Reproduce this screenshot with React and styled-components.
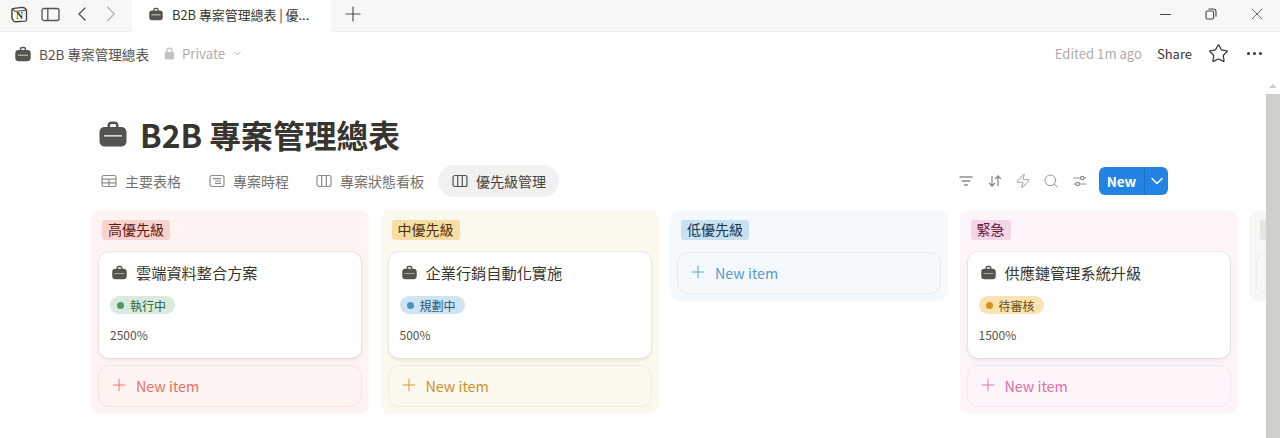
import React from "react";
import styled, { createGlobalStyle } from "styled-components";
import { ChevronLeft, ChevronRight, ChevronDown, Plus, Star, Minus, X, Search, Zap } from "lucide-react";

const Global = createGlobalStyle`
  html, body { margin: 0; padding: 0; background: #fff; overflow: hidden; }
  body { font-family: "Noto Sans CJK TC", "Noto Sans", sans-serif; color: #37352f; }
`;

const Page = styled.div`
  width: 1280px; height: 438px; display: flex; flex-direction: column; overflow: hidden; background: #fff;
`;
const Chrome = styled.div`
  height: 32px; box-sizing: border-box; flex: none; display: flex; align-items: center; background: #f7f7f5; border-bottom: 1px solid #eeeeec; color: #55534e;
`;
const ChromeLeft = styled.div`
  display: flex; align-items: center; width: 132px; flex: none; padding-left: 8px; box-sizing: border-box; margin-bottom: 3px;
`;
const ChromeSlot = styled.span`
  display: flex; align-items: center; justify-content: center; width: ${p => p.$w}px; color: ${p => p.$c || "#55534e"};
`;
const Tab = styled.div`
  width: 199px; height: 32px; align-self: flex-start; flex: none; background: #fff; display: flex; align-items: center; padding: 0 0 4px 17px; box-sizing: border-box; gap: 9px; font-size: 12.9px; color: #37352f;
`;
const NewTab = styled.span`
  display: flex; width: 44px; justify-content: center; color: #55534e; margin-bottom: 3px;
`;
const Spacer = styled.div`flex: 1;`;
const WinBtn = styled.span`
  width: 46px; display: flex; align-items: center; justify-content: center; color: #45433e;
`;
const WinGroup = styled.div`
  display: flex; align-items: center; margin-bottom: 3px;
`;
const TopBar = styled.div`
  height: 45px; box-sizing: border-box; flex: none; display: flex; align-items: center; padding: 0 14px 2px 15px; font-size: 13.6px; color: #55534e;
`;
const Crumb = styled.span`margin-left: 8px; color: #55534e;`;
const PrivateBox = styled.span`
  margin-left: 15px; display: flex; align-items: center; gap: 7px; color: #aeaca8; font-size: 13.2px;
`;
const Edited = styled.span`color: #aeaca8; font-size: 13.1px;`;
const Share = styled.span`color: #37352f; font-size: 13px; margin-left: 15px;`;
const StarWrap = styled.span`display: flex; margin-left: 16px; color: #37352f;`;
const Dots = styled.span`display: flex; gap: 3px; margin-left: 18px; margin-right: 4px;`;
const Dot = styled.i`width: 3px; height: 3px; border-radius: 50%; background: #37352f; display: block;`;

const Body = styled.div`flex: 1; min-height: 0; display: flex;`;
const Main = styled.div`flex: 1; min-width: 0; overflow: hidden;`;
const Scroll = styled.div`
  width: 14px; flex: none; display: flex; flex-direction: column; align-items: center;
`;
const ScrollArrow = styled.div`
  margin-top: 7px; width: 0; height: 0; border-left: 4px solid transparent; border-right: 4px solid transparent; border-bottom: 4px solid #d0cfca;
`;
const ScrollThumb = styled.div`
  margin-top: 6px; width: 100%; flex: 1; background: #d0cfca;
`;

const Title = styled.h1`
  margin: 0; padding: 37px 0 0 99px; display: flex; align-items: center; gap: 13px; font-size: 31.8px; line-height: 40px; font-weight: 700; color: #37352f; height: 40px; box-sizing: content-box;
`;
const ViewRow = styled.div`
  margin-top: 11px; padding: 0 98px 0 91px; display: flex; align-items: center; height: 32px;
`;
const ViewTab = styled.div`
  display: flex; align-items: center; gap: 8px; height: 32px; box-sizing: border-box; padding: 0 ${p => p.$active ? 13 : 12}px 1px ${p => p.$active ? 14 : 10}px; border-radius: 16px; font-size: 14px; margin-right: ${p => p.$mr ?? 0}px;
  color: ${p => p.$active ? "#45433e" : "#73716c"}; background: ${p => p.$active ? "#f1f1ef" : "transparent"};
`;
const Tools = styled.div`
  margin-left: auto; display: flex; align-items: center; gap: 12.3px; color: #8f8d89;
`;
const ToolSlot = styled.span`
  width: 16px; display: flex; justify-content: center; align-items: center;
`;
const NewBtn = styled.div`
  margin-left: -0.8px; height: 28px; display: flex; background: #2383e2; border-radius: 6px; color: #fff; font-size: 13.5px; font-weight: 600; align-items: center;
`;
const NewLabel = styled.span`
  width: 46px; box-sizing: border-box; text-align: center; line-height: 28px; border-right: 1px solid #1f6fc0;
`;
const NewCaret = styled.span`display: flex; justify-content: center; width: 23px;`;

const Board = styled.div`
  margin-top: 13px; padding-left: 91px; display: flex; align-items: flex-start; gap: 11.5px; width: 1400px;
`;
const Column = styled.div`
  width: 278px; flex: none; box-sizing: border-box; border-radius: 10px; background: ${p => p.$bg}; padding: 10px 8px 7px 8px; display: flex; flex-direction: column;
`;
const GroupTag = styled.span`
  align-self: flex-start; margin-left: 3px; height: 20px; line-height: 19px; padding: 0 6px; border-radius: 3px; font-size: 14px; background: ${p => p.$bg}; color: ${p => p.$c};
`;
const Card = styled.div`
  margin-top: 12px; height: 106px; box-sizing: border-box; background: #fff; border-radius: 10px; padding: 11px 11px; box-shadow: 0 0 0 1px rgba(15,15,15,.05), 0 2px 4px rgba(15,15,15,.07);
`;
const CardTitle = styled.div`
  display: flex; align-items: center; gap: 9px; height: 18px; font-size: 15.2px; font-weight: 400; color: #37352f; padding-left: 2px;
`;
const Status = styled.span`
  display: inline-flex; align-items: center; gap: 6px; margin-top: 15px; height: 18px; padding: 0 9px 0 7px; border-radius: 9px; font-size: 12px; background: ${p => p.$bg}; color: ${p => p.$c};
`;
const StatusDot = styled.i`width: 7px; height: 7px; border-radius: 50%; background: ${p => p.$c}; display: block;`;
const Percent = styled.div`
  margin-top: 13px; font-size: 12px; line-height: 16px; color: #55534e;
`;
const AddItem = styled.div`
  margin: ${p => p.$first ? 12 : 7}px -1px 0; height: 42px; box-sizing: border-box; border-radius: 11px; border: 1px solid ${p => p.$border}; display: flex; align-items: center; gap: 7px; padding: 0 0 2px 10px; font-size: 14.3px; color: ${p => p.$c};
`;

const Briefcase = ({ size = 16, color = "#55534e" }) => (
  <svg width={size} height={size} viewBox="0 0 28 28" style={{ flex: "none" }}>
    <path fill={color} fillRule="evenodd" d="M8.5 7V5.5C8.5 3 10.2 1.5 12.5 1.5h3c2.3 0 4 1.5 4 4V7H22c3.4 0 5.5 2.2 5.5 5.5V21c0 3.4-2.1 5.5-5.5 5.5H6C2.600 26.500.5 24.400.5 21v-8.500C.5 9.200 2.600 7 6 7h2.500zM11 7h6V5.700c0-1-.6-1.700-1.700-1.700h-2.600C11.600 4 11 4.700 11 5.700V7zM5 15.200v1.300h18v-1.300H5z" />
  </svg>
);
const Notion = () => (
  <svg width="17" height="17" viewBox="0 0 18 18">
    <path d="M3 2.500 12.600 1.500c.8 0 1.300.2 1.700.6l1.600 1.600c.3.3.5.6.5 1.200v9.600c0 .9-.4 1.400-1.400 1.500l-10.600.6c-.7 0-1-.1-1.400-.6L1.600 14c-.4-.5-.6-.9-.6-1.400V4c0-.8.4-1.400 2-1.500z" fill="#fff" stroke="#45433e" strokeWidth="1.500" />
    <path d="M2 3.400 4.200 5.600 15.600 4.800" fill="none" stroke="#45433e" strokeWidth="1.200" />
    <text x="5.400" y="14" fontFamily="Liberation Serif, serif" fontWeight="700" fontSize="10.500" fill="#37352f">N</text>
  </svg>
);
const Sidebar = () => (
  <svg width="19" height="15" viewBox="0 0 19 15" fill="none" stroke="#55534e" strokeWidth="1.300">
    <rect x="1" y="1.500" width="17" height="12" rx="2" /><path d="M6.800 1.500v12" />
  </svg>
);
const Restore = () => (
  <svg width="12" height="12" viewBox="0 0 12 12" fill="none" stroke="#45433e" strokeWidth="1.100">
    <rect x="1" y="3" width="7.600" height="8" rx="1.600" /><path d="M3.400 1h4.800C9.900 1 11 2.100 11 3.800v5" />
  </svg>
);
const LockIcon = () => (
  <svg width="11" height="13" viewBox="0 0 11 13"><path fill="#c4c3bf" fillRule="evenodd" d="M2.200 5V3.600C2.200 1.700 3.600.5 5.500.5s3.300 1.200 3.300 3.100V5c.9.1 1.400.7 1.400 1.600v4.300c0 1-.6 1.600-1.600 1.600H2.400c-1 0-1.600-.6-1.600-1.600V6.600c0-.9.5-1.500 1.400-1.600zm1.400 0h3.800V3.600c0-1.100-.8-1.800-1.900-1.800s-1.900.7-1.900 1.800V5z" /></svg>
);
const TableIcon = ({ c }) => (
  <svg width="16" height="14" viewBox="0 0 16 14" fill="none" stroke={c} strokeWidth="1.200"><rect x="1" y="1.500" width="14" height="11" rx="2" /><path d="M1 5.200h14M1 8.800h14M8 5.200v7.300" /></svg>
);
const TimelineIcon = ({ c }) => (
  <svg width="16" height="14" viewBox="0 0 16 14" fill="none" stroke={c} strokeWidth="1.200"><rect x="1" y="1.500" width="14" height="11" rx="2" /><path d="M4 4.700h8M6 7h6M6 9.300h6" /></svg>
);
const BoardIcon = ({ c }) => (
  <svg width="16" height="14" viewBox="0 0 16 14" fill="none" stroke={c} strokeWidth="1.200"><rect x="1" y="1.500" width="14" height="11" rx="2" /><path d="M5.700 1.500v11M10.300 1.500v11" /></svg>
);
const FilterIcon = () => (
  <svg width="14" height="12" viewBox="0 0 14 12" fill="none" stroke="#8f8d89" strokeWidth="1.300"><path d="M.5 2h13M2.800 6h8.400M5 10h4" /></svg>
);
const SortIcon = () => (
  <svg width="14" height="14" viewBox="0 0 14 14" fill="none" stroke="#8f8d89" strokeWidth="1.300"><path d="M4 2v10M1 9l3 3 3-3M10 12V2M7 5l3-3 3 3" /></svg>
);
const SliderIcon = () => (
  <svg width="14" height="14" viewBox="0 0 14 14" fill="none" stroke="#8f8d89" strokeWidth="1.200"><path d="M.5 4h7M11 4h2.500M.5 10h2.500M6.500 10h7" /><circle cx="9.200" cy="4" r="1.700" /><circle cx="4.800" cy="10" r="1.700" /></svg>
);

const columns = [
  { name: "高優先級", bg: "#fff4f2", tagBg: "#f8d3cf", tagC: "#5d1715", addC: "#ec6f62", border: "#fbe2df",
    card: { title: "雲端資料整合方案", status: "執行中", sBg: "#d8ebdd", sC: "#2f5d45", dot: "#4f9768", pct: "2500%" } },
  { name: "中優先級", bg: "#fbf8ee", tagBg: "#f7dea4", tagC: "#4d3210", addC: "#cd922a", border: "#f6edd6",
    card: { title: "企業行銷自動化實施", status: "規劃中", sBg: "#cfe4f2", sC: "#2b5573", dot: "#4a90c2", pct: "500%" } },
  { name: "低優先級", bg: "#f3f9fd", tagBg: "#c8e1f0", tagC: "#17364d", addC: "#5b9ac6", border: "#e3edf3" },
  { name: "緊急", bg: "#fdf5f9", tagBg: "#f6d5e6", tagC: "#5c1c41", addC: "#dd6fa8", border: "#f7e7f0",
    card: { title: "供應鏈管理系統升級", status: "待審核", sBg: "#f9e3b2", sC: "#6e4b12", dot: "#d8921c", pct: "1500%" } },
  { name: "\u00a0", bg: "#f7f7f5", tagBg: "#e6e5e2", tagC: "#888", addC: "#aaa", border: "#ececea", hideAddLabel: true },
];

const views = [
  { label: "主要表格", I: TableIcon, mr: 6 },
  { label: "專案時程", I: TimelineIcon, mr: 5 },
  { label: "專案狀態看板", I: BoardIcon, mr: 2 },
  { label: "優先級管理", I: BoardIcon, active: true },
];

export default function App() {
  return (
    <Page>
      <Global />
      <Chrome>
        <ChromeLeft>
          <ChromeSlot $w={22}><Notion /></ChromeSlot>
          <ChromeSlot $w={40}><Sidebar /></ChromeSlot>
          <ChromeSlot $w={24}><ChevronLeft size={26} strokeWidth={1.4} /></ChromeSlot>
          <ChromeSlot $w={34} $c="#b9b8b4"><ChevronRight size={26} strokeWidth={1.4} /></ChromeSlot>
        </ChromeLeft>
        <Tab><Briefcase size={14} /> <span>B2B 專案管理總表 | 優...</span></Tab>
        <NewTab><Plus size={24} strokeWidth={1.2} /></NewTab>
        <Spacer />
        <WinGroup>
          <WinBtn><Minus size={17} strokeWidth={1.5} /></WinBtn>
          <WinBtn><Restore /></WinBtn>
          <WinBtn><X size={20} strokeWidth={0.95} /></WinBtn>
        </WinGroup>
      </Chrome>
      <TopBar>
        <Briefcase size={16} />
        <Crumb>B2B 專案管理總表</Crumb>
        <PrivateBox><LockIcon />Private<ChevronDown size={11} /></PrivateBox>
        <Spacer />
        <Edited>Edited 1m ago</Edited>
        <Share>Share</Share>
        <StarWrap><Star size={21} strokeWidth={1.4} /></StarWrap>
        <Dots><Dot /><Dot /><Dot /></Dots>
      </TopBar>
      <Body>
        <Main>
          <Title><Briefcase size={28} />B2B 專案管理總表</Title>
          <ViewRow>
            {views.map(({ label, I, mr, active }) => (
              <ViewTab key={label} $active={active} $mr={mr}>
                <I c={active ? "#55534e" : "#8f8d88"} />{label}
              </ViewTab>
            ))}
            <Tools>
              <ToolSlot><FilterIcon /></ToolSlot>
              <ToolSlot><SortIcon /></ToolSlot>
              <ToolSlot><Zap size={16} strokeWidth={1.3} /></ToolSlot>
              <ToolSlot><Search size={16} strokeWidth={1.4} /></ToolSlot>
              <ToolSlot><SliderIcon /></ToolSlot>
              <NewBtn>
                <NewLabel>New</NewLabel>
                <NewCaret><ChevronDown size={20} strokeWidth={1.7} /></NewCaret>
              </NewBtn>
            </Tools>
          </ViewRow>
          <Board>
            {columns.map(c => (
              <Column key={c.name} $bg={c.bg}>
                <GroupTag $bg={c.tagBg} $c={c.tagC}>{c.name}</GroupTag>
                {c.card && (
                  <Card>
                    <CardTitle><Briefcase size={15} />{c.card.title}</CardTitle>
                    <Status $bg={c.card.sBg} $c={c.card.sC}><StatusDot $c={c.card.dot} />{c.card.status}</Status>
                    <Percent>{c.card.pct}</Percent>
                  </Card>
                )}
                <AddItem $first={!c.card} $c={c.addC} $border={c.border}>
                  {!c.hideAddLabel && <><Plus size={20} strokeWidth={1.1} />New item</>}
                </AddItem>
              </Column>
            ))}
          </Board>
        </Main>
        <Scroll>
          <ScrollArrow />
          <ScrollThumb />
        </Scroll>
      </Body>
    </Page>
  );
}
